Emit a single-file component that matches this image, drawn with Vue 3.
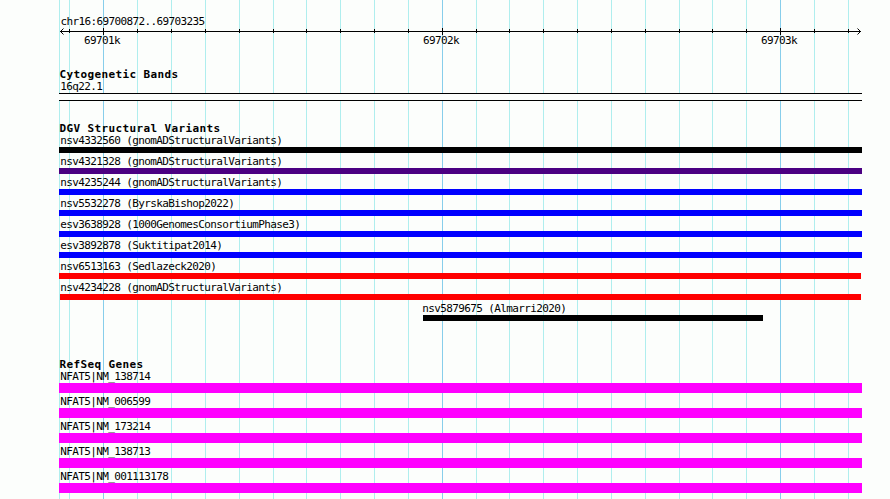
<script setup>
const gridLines = [59, 69, 103, 137, 171, 205, 239, 273, 306, 340, 374, 408, 442, 476, 509, 543, 577, 611, 645, 679, 712, 746, 780, 814, 848]
const majors = { 103: '69701k', 442: '69702k', 780: '69703k' }
const ticks = gridLines.slice(1)

const variants = [
  { name: 'nsv4332560 (gnomADStructuralVariants)', color: '#000000', start: 0, width: 803 },
  { name: 'nsv4321328 (gnomADStructuralVariants)', color: '#4b0082', start: 0, width: 803 },
  { name: 'nsv4235244 (gnomADStructuralVariants)', color: '#0000ff', start: 0, width: 803 },
  { name: 'nsv5532278 (ByrskaBishop2022)', color: '#0000ff', start: 0, width: 803 },
  { name: 'esv3638928 (1000GenomesConsortiumPhase3)', color: '#0000ff', start: 0, width: 803 },
  { name: 'esv3892878 (Suktitipat2014)', color: '#0000ff', start: 0, width: 803 },
  { name: 'nsv6513163 (Sedlazeck2020)', color: '#ff0000', start: 0, width: 802 },
  { name: 'nsv4234228 (gnomADStructuralVariants)', color: '#ff0000', start: 1, width: 801, labelShift: 0 },
  { name: 'nsv5879675 (Almarri2020)', color: '#000000', start: 364, width: 340, labelShift: 362 },
]
const genes = ['NFAT5|NM_138714', 'NFAT5|NM_006599', 'NFAT5|NM_173214', 'NFAT5|NM_138713', 'NFAT5|NM_001113178']
</script>

<template>
  <main class="browser">
    <svg class="grid" width="890" height="499" shape-rendering="crispEdges" aria-hidden="true">
      <rect v-for="x in gridLines" :key="x" :x="x" y="0" width="1" height="499" :fill="majors[x] ? '#87ceeb' : '#afeeee'" />
    </svg>

    <section class="ruler">
      <svg width="890" height="70">
        <g shape-rendering="crispEdges">
          <rect x="60" y="31" width="801" height="1" />
          <rect v-for="x in ticks" :key="x" :x="x" :y="majors[x] ? 28 : 29" width="1" :height="majors[x] ? 7 : 4" />
        </g>
        <path class="arrow" d="M63.5 28.5 L60.5 31.5 L63.5 34.5 M857.5 28.5 L860.5 31.5 L857.5 34.5" />
        <text x="60.4" y="25">chr16:69700872..69703235</text>
        <text v-for="(label, x) in majors" :key="x" :x="Number(x) - 19" y="44">{{ label }}</text>
      </svg>
    </section>

    <section class="track cyto">
      <h2>Cytogenetic Bands</h2>
      <div class="label">16q22.1</div>
      <div class="band"></div>
    </section>

    <section class="track variants">
      <h2>DGV Structural Variants</h2>
      <div v-for="v in variants" :key="v.name" class="feature">
        <div class="label" :style="{ marginLeft: (v.labelShift || 0) + 'px' }">{{ v.name }}</div>
        <div class="bar" :style="{ marginLeft: v.start + 'px', width: v.width + 'px', background: v.color }"></div>
      </div>
    </section>

    <section class="track genes">
      <h2>RefSeq Genes</h2>
      <div v-for="g in genes" :key="g" class="feature">
        <div class="label">{{ g }}</div>
        <div class="bar gene"></div>
      </div>
    </section>
  </main>
</template>

<style>
body {
  margin: 0;
  background: #fcfefc;
}
</style>

<style scoped>
.browser {
  position: relative;
  width: 890px;
  height: 499px;
  overflow: hidden;
  background: #fcfefc;
  color: #000;
  font-family: "DejaVu Sans Mono", monospace;
  font-size: 11px;
  letter-spacing: -0.622px;
}
.grid {
  position: absolute;
  inset: 0;
}
.ruler,
.track {
  position: relative;
}
.ruler,
.ruler svg {
  display: block;
  height: 70px;
}
.arrow {
  fill: none;
  stroke: #000;
  stroke-width: 1;
}
.track {
  margin-left: 59px;
}
.cyto {
  height: 54px;
}
.variants {
  height: 236px;
}
h2 {
  margin: 0;
  height: 12px;
  padding-left: 0.4px;
  font-size: 11px;
  font-weight: 700;
  line-height: 9px;
  letter-spacing: 0.378px;
  white-space: pre;
}
.label {
  height: 11px;
  padding-left: 1.3px;
  line-height: 9px;
  white-space: pre;
}
.band {
  box-sizing: border-box;
  width: 803px;
  height: 8px;
  border: solid #000;
  border-width: 1px 0;
  background: #fcfefc;
}
.feature {
  margin-bottom: 4px;
}
.bar {
  height: 6px;
}
.gene {
  width: 803px;
  height: 10px;
  background: #f0f;
}
</style>
